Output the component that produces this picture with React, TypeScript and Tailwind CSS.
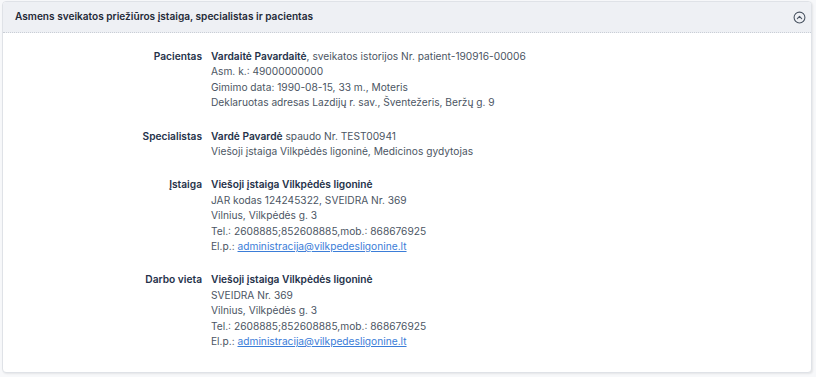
import React from "react";

type Row = { label: string; lines: React.ReactNode[] };

const Email = ({ addr }: { addr: string }) => (
  <>
    El.p.:{" "}
    <a href={`mailto:${addr}`} className="text-[#3b7dd8] underline">
      {addr}
    </a>
  </>
);

const rows: Row[] = [
  {
    label: "Pacientas",
    lines: [
      <>
        <span className="font-semibold text-[#25324a]">Vardaitė Pavardaitė</span>, sveikatos istorijos Nr.
        patient-190916-00006
      </>,
      "Asm. k.: 49000000000",
      "Gimimo data: 1990-08-15, 33 m., Moteris",
      "Deklaruotas adresas Lazdijų r. sav., Šventežeris, Beržų g. 9",
    ],
  },
  {
    label: "Specialistas",
    lines: [
      <>
        <span className="font-semibold text-[#25324a]">Vardė Pavardė</span> spaudo Nr. TEST00941
      </>,
      "Viešoji įstaiga Vilkpėdės ligoninė, Medicinos gydytojas",
    ],
  },
  {
    label: "Įstaiga",
    lines: [
      <span className="font-semibold text-[#25324a]">Viešoji įstaiga Vilkpėdės ligoninė</span>,
      "JAR kodas 124245322, SVEIDRA Nr. 369",
      "Vilnius, Vilkpėdės g. 3",
      "Tel.: 2608885;852608885,mob.: 868676925",
      <Email addr="administracija@vilkpedesligonine.lt" />,
    ],
  },
  {
    label: "Darbo vieta",
    lines: [
      <span className="font-semibold text-[#25324a]">Viešoji įstaiga Vilkpėdės ligoninė</span>,
      "SVEIDRA Nr. 369",
      "Vilnius, Vilkpėdės g. 3",
      "Tel.: 2608885;852608885,mob.: 868676925",
      <Email addr="administracija@vilkpedesligonine.lt" />,
    ],
  },
];

const App = () => {
  return (
    <div className="w-[816px] h-[377px] bg-[#f7f8fa] pl-[2px] pt-[1px] font-['Inter',sans-serif]">
      <div className="w-[810px] h-[372px] bg-white border border-[#dfe2e7] rounded-[4px] shadow-[1px_1px_2px_rgba(0,0,0,0.08)] overflow-hidden">
        {/* header */}
        <div className="h-[31px] flex items-center justify-between pl-[12px] pr-[5px] bg-[#eef0f4] border-b border-dotted border-[#c9ced6]">
          <span className="text-[10.1px] font-semibold text-[#1f2937]">
            Asmens sveikatos priežiūros įstaiga, specialistas ir pacientas
          </span>
          <svg width="13" height="13" viewBox="0 0 24 24" fill="none" stroke="#4b5563" strokeWidth="2" strokeLinecap="round" strokeLinejoin="round">
            <circle cx="12" cy="12" r="10" />
            <path d="m8 14 4-4 4 4" />
          </svg>
        </div>

        {/* body */}
        <div className="pt-[16px] flex flex-col gap-[18px] text-[10.2px] leading-[15.4px] text-[#4b5563]">
          {rows.map((r) => (
            <div key={r.label} className="flex">
              <div className="w-[208px] shrink-0 text-right pr-[9px] font-semibold text-[#25324a]">{r.label}</div>
              <div className="flex flex-col">
                {r.lines.map((l, i) => (
                  <div key={i}>{l}</div>
                ))}
              </div>
            </div>
          ))}
        </div>
      </div>
    </div>
  );
};

export default App;
